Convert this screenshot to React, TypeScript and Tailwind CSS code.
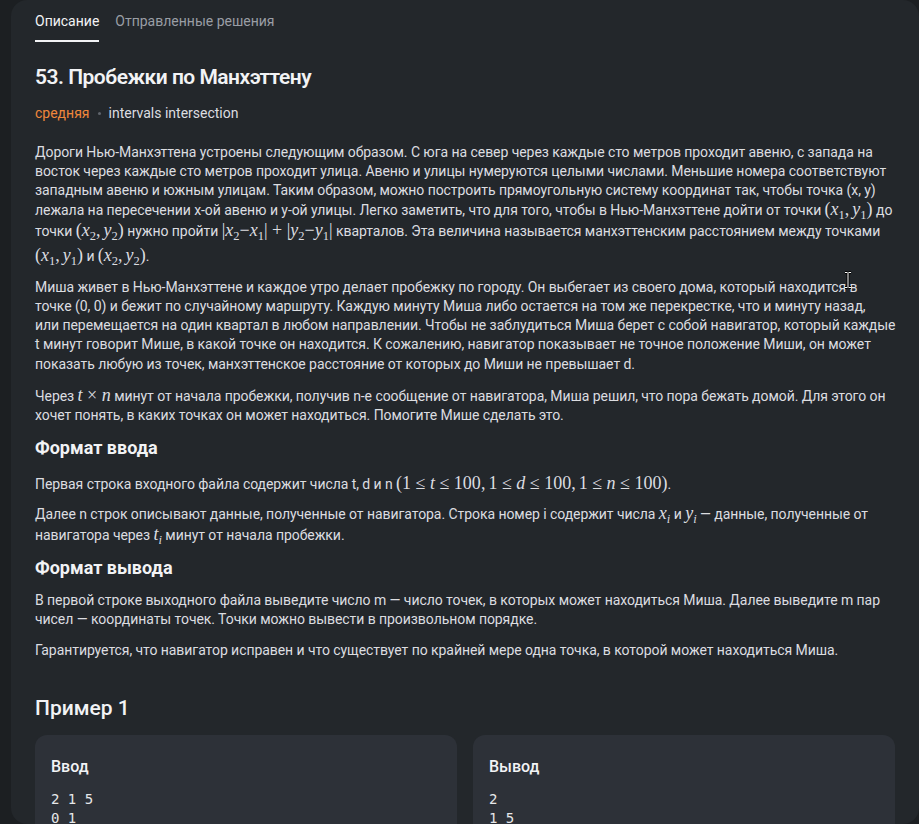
import React from "react";

const M = ({ children }: { children: React.ReactNode }) => (
  <span className="font-['Liberation_Serif',serif] text-[18px] tracking-normal whitespace-nowrap">{children}</span>
);
const V = ({ children }: { children: React.ReactNode }) => <i>{children}</i>;
const S = ({ children }: { children: React.ReactNode }) => (
  <span className="text-[12.5px] not-italic relative top-[4px]">{children}</span>
);
const C = () => <span className="mr-[3px]">,</span>;

const L = ({ h = "h-[19.3px] leading-[19.3px]", children }: { h?: string; children: React.ReactNode }) => (
  <div className={`whitespace-nowrap ${h}`}>{children}</div>
);

const P1 = () => (
  <M>
    (<V>x</V>
    <S>1</S>
    <C />
    <V>y</V>
    <S>1</S>)
  </M>
);
const P2 = () => (
  <M>
    (<V>x</V>
    <S>2</S>
    <C />
    <V>y</V>
    <S>2</S>)
  </M>
);

export default function App() {
  return (
    <div className="relative w-[919px] h-[824px] bg-[#1c1f22] pl-[11px] overflow-hidden font-['Roboto',sans-serif]">
      <div className="h-[824px] bg-[#23272b] rounded-2xl overflow-hidden pl-6 pr-6 text-[14px] tracking-[-0.06px] text-[#dcdde0]">
        {/* tabs */}
        <div className="flex gap-4 pt-[11px] tracking-normal">
          <div className="flex flex-col">
            <span className="text-[#f2f3f5] leading-[20px] pb-[9px]">Описание</span>
            <div className="h-[2px] bg-[#f2f3f5]" />
          </div>
          <span className="text-[#9a9ea5] leading-[20px]">Отправленные решения</span>
        </div>

        <h1 className="mt-[21px] text-[21px] leading-[28px] font-semibold tracking-[-0.5px] text-[#f2f3f5]">
          53. Пробежки по Манхэттену
        </h1>

        <div className="mt-[12px] flex items-center gap-[8px] leading-[20px] tracking-normal">
          <span className="text-[#f0873c]">средняя</span>
          <span className="w-[3px] h-[3px] rounded-full bg-[#5f646b]" />
          <span className="text-[#dcdde0]">intervals intersection</span>
        </div>

        <div className="mt-[19.5px]">
          <L h="h-[19px] leading-[19px]">
            Дороги Нью-Манхэттена устроены следующим образом. С юга на север через каждые сто метров проходит авеню, с запада на
          </L>
          <L h="h-[19px] leading-[19px]">
            восток через каждые сто метров проходит улица. Авеню и улицы нумеруются целыми числами. Меньшие номера соответствуют
          </L>
          <L h="h-[19px] leading-[19px]">
            западным авеню и южным улицам. Таким образом, можно построить прямоугольную систему координат так, чтобы точка (x, y)
          </L>
          <L h="h-[19px] leading-[19px]">
            лежала на пересечении x-ой авеню и y-ой улицы. Легко заметить, что для того, чтобы в Нью-Манхэттене дойти от точки <P1 />{" "}
            до
          </L>
          <L h="h-[23px] leading-[23px]">
            точки <P2 /> нужно пройти{" "}
            <M>
              |<V>x</V>
              <S>2</S>−<V>x</V>
              <S>1</S>| + |<V>y</V>
              <S>2</S>−<V>y</V>
              <S>1</S>|
            </M>{" "}
            кварталов. Эта величина называется манхэттенским расстоянием между точками
          </L>
          <L h="h-[27px] leading-[27px]">
            <P1 /> и <P2 />.
          </L>
        </div>

        <div className="mt-[9px]">
          <L>Миша живет в Нью-Манхэттене и каждое утро делает пробежку по городу. Он выбегает из своего дома, который находится в</L>
          <L>
            точке (0, 0) и бежит по случайному маршруту. Каждую минуту Миша либо остается на том же перекрестке, что и минуту назад,
          </L>
          <L>
            или перемещается на один квартал в любом направлении. Чтобы не заблудиться Миша берет с собой навигатор, который каждые
          </L>
          <L>
            t минут говорит Мише, в какой точке он находится. К сожалению, навигатор показывает не точное положение Миши, он может
          </L>
          <L>показать любую из точек, манхэттенское расстояние от которых до Миши не превышает d.</L>
        </div>

        <div className="mt-[10px]">
          <L h="h-[22px] leading-[22px]">
            Через{" "}
            <M>
              <V>t</V> × <V>n</V>
            </M>{" "}
            минут от начала пробежки, получив n-е сообщение от навигатора, Миша решил, что пора бежать домой. Для этого он
          </L>
          <L>хочет понять, в каких точках он может находиться. Помогите Мише сделать это.</L>
        </div>

        <h2 className="mt-[10.5px] text-[18px] leading-[24px] font-bold tracking-normal text-[#f2f3f5]">Формат ввода</h2>
        <div className="mt-[12px]">
          <L h="h-[22px] leading-[22px]">
            Первая строка входного файла содержит числа t, d и n{" "}
            <M>
              (1 ≤ <V>t</V> ≤ 100
              <C />1 ≤ <V>d</V> ≤ 100
              <C />1 ≤ <V>n</V> ≤ 100)
            </M>
            .
          </L>
        </div>
        <div className="mt-[9.5px]">
          <L h="h-[21px] leading-[21px]">
            Далее n строк описывают данные, полученные от навигатора. Строка номер i содержит числа{" "}
            <M>
              <V>x</V>
              <S>
                <i>i</i>
              </S>
            </M>{" "}
            и{" "}
            <M>
              <V>y</V>
              <S>
                <i>i</i>
              </S>
            </M>{" "}
            — данные, полученные от
          </L>
          <L h="h-[21px] leading-[21px]">
            навигатора через{" "}
            <M>
              <V>t</V>
              <S>
                <i>i</i>
              </S>
            </M>{" "}
            минут от начала пробежки.
          </L>
        </div>

        <h2 className="mt-[10.5px] text-[18px] leading-[24px] font-bold tracking-normal text-[#f2f3f5]">Формат вывода</h2>
        <div className="mt-[11.4px]">
          <L>
            В первой строке выходного файла выведите число m — число точек, в которых может находиться Миша. Далее выведите m пар
          </L>
          <L>чисел — координаты точек. Точки можно вывести в произвольном порядке.</L>
        </div>
        <div className="mt-[11.5px]">
          <L>Гарантируется, что навигатор исправен и что существует по крайней мере одна точка, в которой может находиться Миша.</L>
        </div>

        <h2 className="mt-[33px] text-[21px] leading-[28px] font-medium tracking-normal text-[#f2f3f5]">Пример 1</h2>

        <div className="mt-[13px] grid grid-cols-2 gap-4 tracking-normal">
          {[
            ["Ввод", ["2 1 5", "0 1"]],
            ["Вывод", ["2", "1 5"]],
          ].map(([title, lines]) => (
            <div key={title as string} className="bg-[#2d3138] rounded-xl px-4 pt-[22px] pb-4">
              <div className="text-[16px] leading-[20px] font-medium text-[#f2f3f5]">{title as string}</div>
              <pre className="mt-[13.3px] font-['DejaVu_Sans_Mono',monospace] text-[14px] leading-[19.3px] text-[#e6e7e9]">
                {(lines as string[]).join("\n")}
              </pre>
            </div>
          ))}
        </div>
      </div>

      {/* mouse text cursor */}
      <svg className="absolute left-[843px] top-[271px]" width="10" height="18" viewBox="0 0 10 18">
        <path d="M2 1.5h2.5M5.5 1.5H8M5 2v14M2 16.5h2.5M5.5 16.5H8" stroke="#000" strokeWidth="3" fill="none" />
        <path d="M2 1.5h2.5M5.5 1.5H8M5 2v14M2 16.5h2.5M5.5 16.5H8" stroke="#fff" strokeWidth="1" fill="none" />
      </svg>
    </div>
  );
}
